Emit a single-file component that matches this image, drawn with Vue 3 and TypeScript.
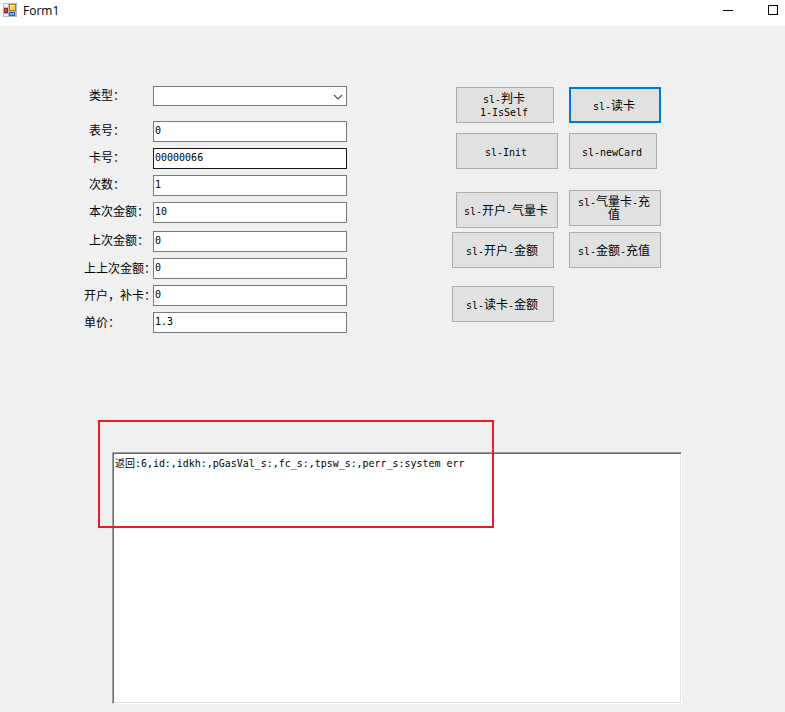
<script setup lang="ts">
import { reactive, ref } from 'vue'

interface Field {
  id: string
  label: string
  value: string
  outdent?: boolean
  spaced?: boolean
  active?: boolean
}

interface Action {
  text: string
  size: 'small' | 'medium' | 'normal' | 'wide'
  place?: string
  primary?: boolean
}

const kind = ref('')

const fields = reactive<Field[]>([
  { id: 'meter', label: '表号：', value: '0' },
  { id: 'card', label: '卡号：', value: '00000066', active: true },
  { id: 'times', label: '次数：', value: '1' },
  { id: 'amount', label: '本次金额：', value: '10' },
  { id: 'last', label: '上次金额：', value: '0', spaced: true },
  { id: 'previous', label: '上上次金额：', value: '0', outdent: true },
  { id: 'open', label: '开户，补卡：', value: '0', outdent: true },
  { id: 'price', label: '单价：', value: '1.3', outdent: true },
])

const leftActions: Action[] = [
  { text: 'sl-判卡\n1-IsSelf', size: 'normal', place: 'inset' },
  { text: 'sl-Init', size: 'wide', place: 'inset gap-m' },
  { text: 'sl-开户-气量卡', size: 'wide', place: 'inset gap-xxl' },
  { text: 'sl-开户-金额', size: 'wide', place: 'gap-xs' },
  { text: 'sl-读卡-金额', size: 'wide', place: 'gap-l' },
]

const rightActions: Action[] = [
  { text: 'sl-读卡', size: 'medium', primary: true },
  { text: 'sl-newCard', size: 'small', place: 'gap-m' },
  { text: 'sl-气量卡-充\n值', size: 'medium', place: 'gap-xl' },
  { text: 'sl-金额-充值', size: 'medium', place: 'gap-s' },
]

const columns = [leftActions, rightActions]

const output = ref('返回:6,id:,idkh:,pGasVal_s:,fc_s:,tpsw_s:,perr_s:system err')

// Latin runs are set in a narrower face than the Chinese ones.
function runs(line: string) {
  return (line.match(/[\x20-\x7e]+|[^\x20-\x7e]+/g) ?? []).map((text) => ({
    text,
    latin: /^[\x20-\x7e]/.test(text),
  }))
}
</script>

<template>
  <div class="window">
    <header class="titlebar">
      <svg class="app-icon" viewBox="0 0 14 14" aria-hidden="true">
        <rect width="14" height="14" fill="#b9bcc0" />
        <path d="M1 1h4v3H1zM1 11h4v2H1z" fill="#eef0f3" />
        <rect x="6" y="1" width="7" height="7" fill="#b77a10" />
        <rect x="7" y="2" width="5" height="5" fill="#fbcf42" />
        <path d="M7 2h4v1H8v3H7z" fill="#ffe995" />
        <rect x="1" y="5" width="4" height="5" fill="#9c1717" />
        <rect x="2" y="6" width="2" height="3" fill="#e14a35" />
        <rect x="6" y="9" width="6" height="4" fill="#2c5cc0" />
        <rect x="7" y="10" width="4" height="2" fill="#78aaf5" />
      </svg>
      <h1 class="title">Form1</h1>
      <div class="controls">
        <button type="button" class="control" aria-label="Minimize">
          <svg viewBox="0 0 10 10"><path d="M0 5.5h10" stroke="#000" /></svg>
        </button>
        <button type="button" class="control" aria-label="Maximize">
          <svg viewBox="0 0 10 10"><rect x=".5" y=".5" width="9" height="9" fill="none" stroke="#000" /></svg>
        </button>
      </div>
    </header>

    <main class="client">
      <div class="upper">
        <form class="fields" @submit.prevent>
          <div class="row row-kind">
            <label class="label" for="kind">类型：</label>
            <span class="combo">
              <select id="kind" v-model="kind" class="box select">
                <option value=""></option>
              </select>
              <svg class="chevron" viewBox="0 0 10 6" aria-hidden="true">
                <path d="M1 1 5 5 9 1" fill="none" stroke="#555" stroke-width="1.2" />
              </svg>
            </span>
          </div>
          <div v-for="f in fields" :key="f.id" class="row" :class="{ spaced: f.spaced }">
            <label class="label" :class="{ outdent: f.outdent }" :for="f.id">{{ f.label }}</label>
            <input :id="f.id" v-model="f.value" type="text" class="box input" :class="{ active: f.active }" />
          </div>
        </form>

        <div class="actions">
          <div v-for="(column, c) in columns" :key="c" class="column">
            <button
              v-for="a in column"
              :key="a.text"
              type="button"
              class="action"
              :class="[a.size, a.place, { primary: a.primary }]"
            >
              <span v-for="line in a.text.split('\n')" :key="line" class="line"
                ><span v-for="run in runs(line)" :key="run.text" :class="{ latin: run.latin }">{{ run.text }}</span></span
              >
            </button>
          </div>
        </div>
      </div>

      <section class="result">
        <textarea v-model="output" class="output" aria-label="返回" spellcheck="false"></textarea>
        <div class="marker"></div>
      </section>
    </main>
  </div>
</template>

<style>
body {
  margin: 0;
  background: #f0f0f0;
}
</style>

<style scoped>
.window {
  box-sizing: border-box;
  min-height: 100vh;
  display: flex;
  flex-direction: column;
  background: #f0f0f0;
  color: #000;
  font-family: 'Noto Sans CJK SC', sans-serif;
  font-size: 12px;
}
.titlebar {
  display: flex;
  height: 26px;
  background: #fff;
}
.app-icon {
  width: 14px;
  height: 14px;
  margin: 3px 6px 0 3px;
}
.title {
  margin: 0;
  font: 400 12px/22px 'Open Sans', sans-serif;
}
.controls {
  display: flex;
  margin-left: auto;
  height: 20px;
}
.control {
  width: 45px;
  padding: 0 7px 0 0;
  border: 0;
  background: none;
  display: flex;
  align-items: center;
  justify-content: flex-end;
}
.control svg {
  width: 10px;
  height: 10px;
}
.client {
  flex: 1;
  display: flex;
  flex-direction: column;
  padding: 60px 103px 8px 84px;
}
.upper {
  display: flex;
  gap: 105px;
  padding-right: 21px;
}
.fields {
  flex: 1;
  min-width: 0;
  display: flex;
  flex-direction: column;
  gap: 6px;
}
.row {
  display: grid;
  grid-template-columns: 69px minmax(0, 1fr);
}
.row-kind {
  margin-bottom: 9px;
}
.spaced {
  margin-top: 2px;
}
.label {
  padding-left: 5px;
  line-height: 17px;
  white-space: nowrap;
}
.label.outdent {
  padding-left: 0;
  line-height: 19px;
}
.box {
  box-sizing: border-box;
  width: 100%;
  margin: 0;
  border: 1px solid #7a7a7a;
  border-radius: 0;
  background: #fff;
  color: #000;
  font: 10px/14px 'DejaVu Sans Mono', monospace;
  outline: 0;
}
.input {
  height: 21px;
  padding: 0 1px 2px;
}
.input.active {
  border-color: #171717;
}
.combo {
  position: relative;
  display: flex;
}
.select {
  height: 20px;
  padding: 0 18px 0 2px;
  appearance: none;
}
.chevron {
  position: absolute;
  top: 8px;
  right: 4px;
  width: 10px;
  height: 6px;
  pointer-events: none;
}
.actions {
  display: flex;
  gap: 11px;
  padding-top: 1px;
}
.column {
  display: flex;
  flex-direction: column;
  align-items: flex-start;
}
.action {
  box-sizing: border-box;
  height: 36px;
  padding: 0 2px 2px 0;
  border: 1px solid #adadad;
  background: #e1e1e1;
  color: #000;
  font: inherit;
  line-height: 13px;
  white-space: nowrap;
}
.action.primary {
  border: 2px solid #0078d7;
}
.small {
  width: 88px;
}
.medium {
  width: 92px;
}
.normal {
  width: 98px;
}
.wide {
  width: 102px;
}
.inset {
  margin-left: 4px;
}
.gap-xs {
  margin-top: 4px;
}
.gap-s {
  margin-top: 6px;
}
.gap-m {
  margin-top: 10px;
}
.gap-l {
  margin-top: 18px;
}
.gap-xl {
  margin-top: 21px;
}
.gap-xxl {
  margin-top: 23px;
}
.line {
  display: block;
  height: 13px;
}
.latin {
  font-family: 'DejaVu Sans Mono', monospace;
  font-size: 10px;
}
.result {
  flex: 1;
  position: relative;
  display: flex;
  margin: 119px 0 0 28px;
}
.output {
  box-sizing: border-box;
  flex: 1;
  min-height: 252px;
  padding: 1px 2px;
  border: 1px solid;
  border-color: #a0a0a0 #fff #fff #a0a0a0;
  box-shadow: inset 1px 1px #696969, inset -1px -1px #e3e3e3;
  background: #fff;
  color: #000;
  font: 12px/20px 'DejaVu Sans Mono', 'Noto Sans CJK SC', monospace;
  font-size-adjust: ch-width 0.5;
  resize: none;
  outline: 0;
}
.marker {
  position: absolute;
  top: -32px;
  left: -14px;
  box-sizing: border-box;
  width: 396px;
  height: 108px;
  border: 2px solid #ed1c24;
  pointer-events: none;
}
</style>
